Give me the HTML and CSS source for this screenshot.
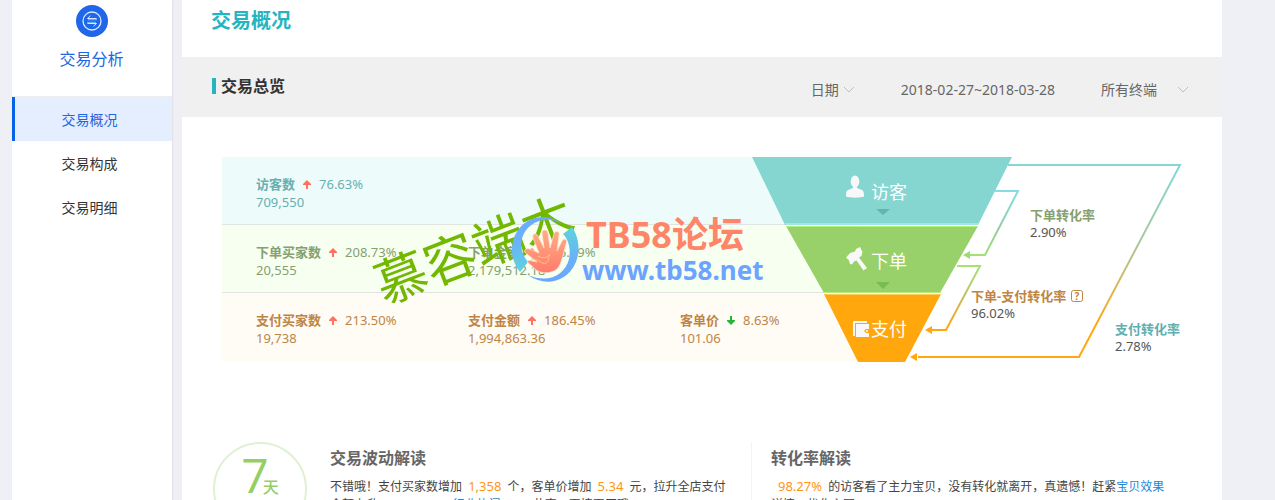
FILE: index.html
```html
<!DOCTYPE html>
<html lang="zh-CN">
<head>
<meta charset="utf-8">
<title>交易概况</title>
<link rel="stylesheet" href="styles.css">
</head>
<body>
<div class="page">
  <aside class="sidebar">
    <div class="brand">
      <svg class="brand-icon" width="32" height="32" viewBox="0 0 32 32" aria-hidden="true">
        <circle cx="16" cy="16" r="16" fill="#2066e8"/>
        <circle cx="16" cy="16" r="9" fill="none" stroke="#dce8ff" stroke-width="1.3"/>
        <path d="M12 14.5h9M11 17.5h9" stroke="#5cb0f5" stroke-width="1.6"/>
        <path d="M11.5 13.5h9M11.5 13.5l3-2.700M20.500 18.500h-9M20.500 18.500l-3 2.700" fill="none" stroke="#dce8ff" stroke-width="1"/>
      </svg>
      <span class="brand-name">交易分析</span>
    </div>
    <nav class="menu">
      <a class="menu-item active" href="#overview">交易概况</a>
      <a class="menu-item" href="#structure">交易构成</a>
      <a class="menu-item" href="#detail">交易明细</a>
    </nav>
  </aside>

  <main class="main">
    <h1 class="title">交易概况</h1>
    <div class="toolbar">
      <h2 class="toolbar-title">交易总览</h2>
      <button class="filter filter-date" type="button">日期
        <svg width="12" height="8" viewBox="0 0 12 8" aria-hidden="true"><path d="M1 1l5 5 5-5" fill="none" stroke="#b5c7b0"/></svg>
      </button>
      <span class="range">2018-02-27~2018-03-28</span>
      <button class="filter filter-device" type="button">所有终端
        <svg width="12" height="8" viewBox="0 0 12 8" aria-hidden="true"><path d="M1 1l5 5 5-5" fill="none" stroke="#b5c7b0"/></svg>
      </button>
    </div>

    <section class="overview">
      <div class="stats">
        <div class="row visit">
          <div class="stat"><div class="line"><b>访客数</b><svg class="arrow" viewBox="0 0 8 9"><path d="M4 0l4 4v1H5v4H3V5H0V4z" fill="#ff7261"/></svg><span>76.63%</span></div><div>709,550</div></div>
        </div>
        <div class="row order">
          <div class="stat"><div class="line"><b>下单买家数</b><svg class="arrow" viewBox="0 0 8 9"><path d="M4 0l4 4v1H5v4H3V5H0V4z" fill="#ff7261"/></svg><span>208.73%</span></div><div>20,555</div></div>
          <div class="stat"><div class="line"><b>下单金额</b><svg class="arrow" viewBox="0 0 8 9"><path d="M4 0l4 4v1H5v4H3V5H0V4z" fill="#ff7261"/></svg><span>185.49%</span></div><div>2,179,512.18</div></div>
        </div>
        <div class="row pay">
          <div class="stat"><div class="line"><b>支付买家数</b><svg class="arrow" viewBox="0 0 8 9"><path d="M4 0l4 4v1H5v4H3V5H0V4z" fill="#ff7261"/></svg><span>213.50%</span></div><div>19,738</div></div>
          <div class="stat"><div class="line"><b>支付金额</b><svg class="arrow" viewBox="0 0 8 9"><path d="M4 0l4 4v1H5v4H3V5H0V4z" fill="#ff7261"/></svg><span>186.45%</span></div><div>1,994,863.36</div></div>
          <div class="stat"><div class="line"><b>客单价</b><svg class="arrow" viewBox="0 0 8 9"><path d="M4 9L0 5V4h3V0h2v4h3v1z" fill="#22b53a"/></svg><span>8.63%</span></div><div>101.06</div></div>
        </div>
      </div>

      <svg class="funnel" viewBox="0 0 430 205" width="430" height="205">
        <defs>
          <linearGradient id="g1" gradientUnits="userSpaceOnUse" x1="0" y1="34" x2="0" y2="98"><stop offset="0.1" stop-color="#86dce0"/><stop offset="0.6" stop-color="#98cba0"/><stop offset="1" stop-color="#a2e078"/></linearGradient>
          <linearGradient id="g2" gradientUnits="userSpaceOnUse" x1="0" y1="109" x2="0" y2="173"><stop offset="0" stop-color="#a5e374"/><stop offset="0.5" stop-color="#c7bd5c"/><stop offset="1" stop-color="#ffa70d"/></linearGradient>
          <linearGradient id="g3" gradientUnits="userSpaceOnUse" x1="0" y1="8" x2="0" y2="200"><stop offset="0.05" stop-color="#86d6d4"/><stop offset="0.45" stop-color="#aec692"/><stop offset="0.65" stop-color="#e0b652"/><stop offset="0.85" stop-color="#ffa70d"/></linearGradient>
        </defs>
        <path d="M0 0H260L226 68H33z" fill="#85d5d1"/>
        <path d="M33 66h194l-1 2H34z" fill="#a3e3ea"/>
        <path d="M34 69H226L188 136H72z" fill="#98d069"/>
        <path d="M34 69H226l-1 1H35z" fill="#b5f07b"/>
        <path d="M71 135h118l-1 1H72z" fill="#b5ec82"/>
        <path d="M72 137H189L153 205H106z" fill="#ffa70d"/>
        <path d="M73 137h116l-1 1H74z" fill="#ffca62"/>
        <g fill="none" stroke-width="2">
          <path d="M256 8H428L327 200H166" stroke="url(#g3)"/>
          <path d="M243 34H266L233 98H218" stroke="url(#g1)"/>
          <path d="M205 109H228L194 173H180" stroke="url(#g2)"/>
        </g>
        <path d="M211 98l7-4v8z" fill="#9add70"/>
        <path d="M173 173l7-4v8z" fill="#ffa70d"/>
        <path d="M158 200l7-4v8z" fill="#ffa70d"/>
        <path d="M124 52h14l-7 6z" fill="#62b5b4"/>
        <path d="M124 125h14l-7 7z" fill="#79bb4c"/>
        <g fill="#f8f8f8">
          <ellipse cx="103" cy="24.500" rx="4.300" ry="6"/>
          <path d="M101 29h4v2l5 2c2 1 2 4 2 6.500-3 1.500-15 1.500-18 0 0-2.500 0-5.500 2-6.500l5-2z"/>
          <path d="M94 100.500l4-4.500 5-1.500 1-2.500 4-2 2.500 5-1 4-2.500 1.500 8 10.500-3.500 2.500-7-10-2.500 1-2 3-2-0.500-1-3.500z"/>
          <path d="M101 164h14v2h-12v13h-2z"/>
          <path d="M104 167h13v5h-3l-2 2 2 2h3v4h-13z"/>
        </g>
        <circle cx="115" cy="174" r="1" fill="#f8f8f8"/>
        <g class="stage">
          <text x="119" y="42">访客</text>
          <text x="119" y="111">下单</text>
          <text x="119" y="179">支付</text>
        </g>
        <g class="rate">
          <text class="name order-rate" x="278" y="63">下单转化率</text>
          <text x="278" y="80">2.90%</text>
          <text class="name deal-rate" x="219" y="144">下单-支付转化率</text>
          <text x="219" y="161">96.02%</text>
          <text class="name pay-rate" x="363" y="177">支付转化率</text>
          <text x="363" y="194">2.78%</text>
          <rect x="319.500" y="133.500" width="11" height="11" rx="2" fill="none" stroke="#be8545"/>
          <text class="help" x="325" y="143">?</text>
        </g>
      </svg>

      <svg class="watermark" viewBox="0 0 410 120" width="410" height="120">
        <defs>
          <linearGradient id="ring" x1="0" y1="0" x2="0" y2="1"><stop offset="0" stop-color="#6aaaff"/><stop offset="0.500" stop-color="#6ab4f8"/><stop offset="1" stop-color="#5dd4dc"/></linearGradient>
          <linearGradient id="ring2" x1="0" y1="0" x2="0" y2="1"><stop offset="0" stop-color="#5dd4dc"/><stop offset="0.600" stop-color="#6ab0f8"/><stop offset="1" stop-color="#6aa6ff"/></linearGradient>
          <linearGradient id="palm" x1="0" y1="0" x2="0" y2="1"><stop offset="0" stop-color="#ffad86"/><stop offset="1" stop-color="#ff7c6c"/></linearGradient>
        </defs>
        <text class="wm-green" transform="translate(14 113) rotate(-21)" x="0" y="0">慕容端木</text>
        <path d="M193 33Q184 25 173 25C155 25 142 40 142 58c0 8 3 16 8 22l8-10C143 52 155 28 178 27.500Q186 28 193 33z" fill="url(#ring)"/>
        <path d="M193 42l9-7C209 45 211 60 205 72C197 89 176 96 158 83C178 92 195 83 199 67C201 58 199 48 193 42z" fill="url(#ring2)"/>
        <path d="M155 58c2-2 5-1 7 0l7 3-6-15c-1-4 3-6 5-2l6 12-2-15c0-4 5-4 6 0l2 15 4-14c1-4 6-3 5 1l-2 16 5-10c2-3 6-2 4 3-3 9-4 20-9 25-6 5-17 5-22 0-3-4-7-5-8-8 2-1 6 0 10 1l-10-8c-2-1-3-3-2-4z" fill="url(#palm)" stroke="#ffe1c8" stroke-width="0.800"/>
        <path d="M161 67c9 0 11 6 15 4s1-5 4-8M168 64c5 3 9 2 12-2" fill="none" stroke="#ffc47e"/>
        <text class="wm-red" x="216" y="56">TB58论坛</text>
        <text class="wm-blue" x="212" y="88">www.tb58.net</text>
      </svg>
    </section>

    <section class="insights">
      <div class="badge"><span class="num">7</span><span class="unit">天</span></div>
      <article class="insight">
        <h3>交易波动解读</h3>
        <p>不错哦！支付买家数增加 <em>1,358</em> 个，客单价增加 <em>5.34</em> 元，拉升全店支付金额上升 1,994,863.36<a href="#hot">行业热门</a> 2.0，恭喜，再接再厉哦</p>
      </article>
      <article class="insight second">
        <h3>转化率解读</h3>
        <p><em class="lead">98.27%</em> 的访客看了主力宝贝，没有转化就离开，真遗憾！赶紧<a href="#effect">宝贝效果</a><br>详情，优化主图</p>
      </article>
    </section>
  </main>
</div>
</body>
</html>
```
FILE: styles.css
```css
* { box-sizing: border-box; }
body {
  margin: 0;
  height: 100vh;
  overflow: hidden;
  background: #eef0f6;
  color: #444;
  font: 13px/18px "Noto Sans", "Noto Sans CJK SC", sans-serif;
}
a { text-decoration: none; color: #1f86d8; }
h1, h2, h3, p { margin: 0; }

.page {
  display: grid;
  grid-template-columns: 160px 1fr;
  gap: 10px;
  padding: 0 53px 0 12px;
  min-height: 100vh;
}
.sidebar { background: #fff; box-shadow: 1px 0 2px #dfe1e6; }
.brand {
  display: flex;
  flex-direction: column;
  align-items: center;
  gap: 10px;
  height: 97px;
  padding: 5px 1px 0 0;
  border-bottom: 1px solid #eee;
}
.brand-name { color: #2066e0; font-size: 16px; line-height: 24px; }
.menu { display: flex; flex-direction: column; }
.menu-item {
  padding: 1px 8px 0 0;
  border-left: 3px solid transparent;
  color: #333;
  font-size: 14px;
  line-height: 43px;
  text-align: center;
}
.menu-item.active { background: #e4eeff; border-color: #0862e8; color: #2066e0; }

.main { background: #fff; min-width: 0; }
.title {
  height: 57px;
  padding: 5px 29px;
  color: #24b5c0;
  font-size: 20px;
  line-height: 32px;
}
.toolbar {
  display: flex;
  align-items: center;
  height: 60px;
  padding: 5px 33px 0 30px;
  background: #f0f0f0;
  color: #666;
  font-size: 14px;
}
.toolbar-title {
  margin: 0 auto 8px 0;
  padding-left: 5px;
  border-left: 4px solid #24b5c0;
  color: #333;
  font-size: 16px;
  line-height: 16px;
}
.filter {
  display: flex;
  align-items: center;
  gap: 4px;
  padding: 0;
  border: 0;
  background: none;
  color: inherit;
  font: inherit;
}
.range { margin: 0 46px; }
.filter-device { gap: 20px; }

.overview {
  position: relative;
  display: grid;
  grid-template-columns: 1fr 105px 325px;
  padding: 40px;
}
.stats { grid-area: 1 / 1 / 2 / 3; }
.funnel { grid-area: 1 / 2 / 2 / 4; overflow: visible; }
.row {
  display: grid;
  grid-template-columns: 212px 212px 1fr;
  height: 68px;
  padding: 18px 0 0 34px;
  border-bottom: 1px solid #e2e4e4;
}
.visit { background: #eefbfb; color: #66b0b0; }
.order { background: #f6fff0; color: #86a070; }
.pay { background: #fffbf5; color: #be8545; border: 0; }
.line { display: flex; align-items: center; }
.arrow { width: 8px; height: 9px; margin: 0 8px; }
.stage text { fill: #fff; font-size: 18px; }
.rate text { fill: #555; }
.rate .name { font-weight: 700; }
.rate .order-rate { fill: #86a070; }
.rate .deal-rate { fill: #be8545; }
.rate .pay-rate { fill: #5fb0b0; }
.rate .help { fill: #be8545; font-size: 10px; font-weight: 700; text-anchor: middle; }

.watermark { position: absolute; left: 188px; top: 75px; pointer-events: none; overflow: visible; }
.wm-green { fill: #72b700; font-size: 52px; }
.wm-red { fill: #ff8568; font-size: 36px; font-weight: 700; }
.wm-blue { fill: #6ba3ff; font-size: 26px; font-weight: 700; }

.insights {
  display: grid;
  grid-template-columns: 94px 398px 1fr;
  column-gap: 23px;
  padding: 40px 30px 40px 31px;
  font-size: 12px;
}
.badge {
  display: flex;
  align-items: baseline;
  justify-content: center;
  height: 94px;
  border: 2px solid #dff1d2;
  border-radius: 50%;
  color: #93cf63;
}
.num { font: 400 48px/62px "Open Sans", sans-serif; }
.unit { margin-left: -6px; font-size: 16px; font-weight: 500; }
.insight h3 { margin-bottom: 3px; color: #666; font-size: 16px; line-height: 32px; }
.insight em { margin: 0 3px; color: #ff9419; font-size: 13px; font-style: normal; }
.insight .lead { margin-left: 7px; }
.second { padding-left: 19px; border-left: 1px solid #f4f4f4; }
```
